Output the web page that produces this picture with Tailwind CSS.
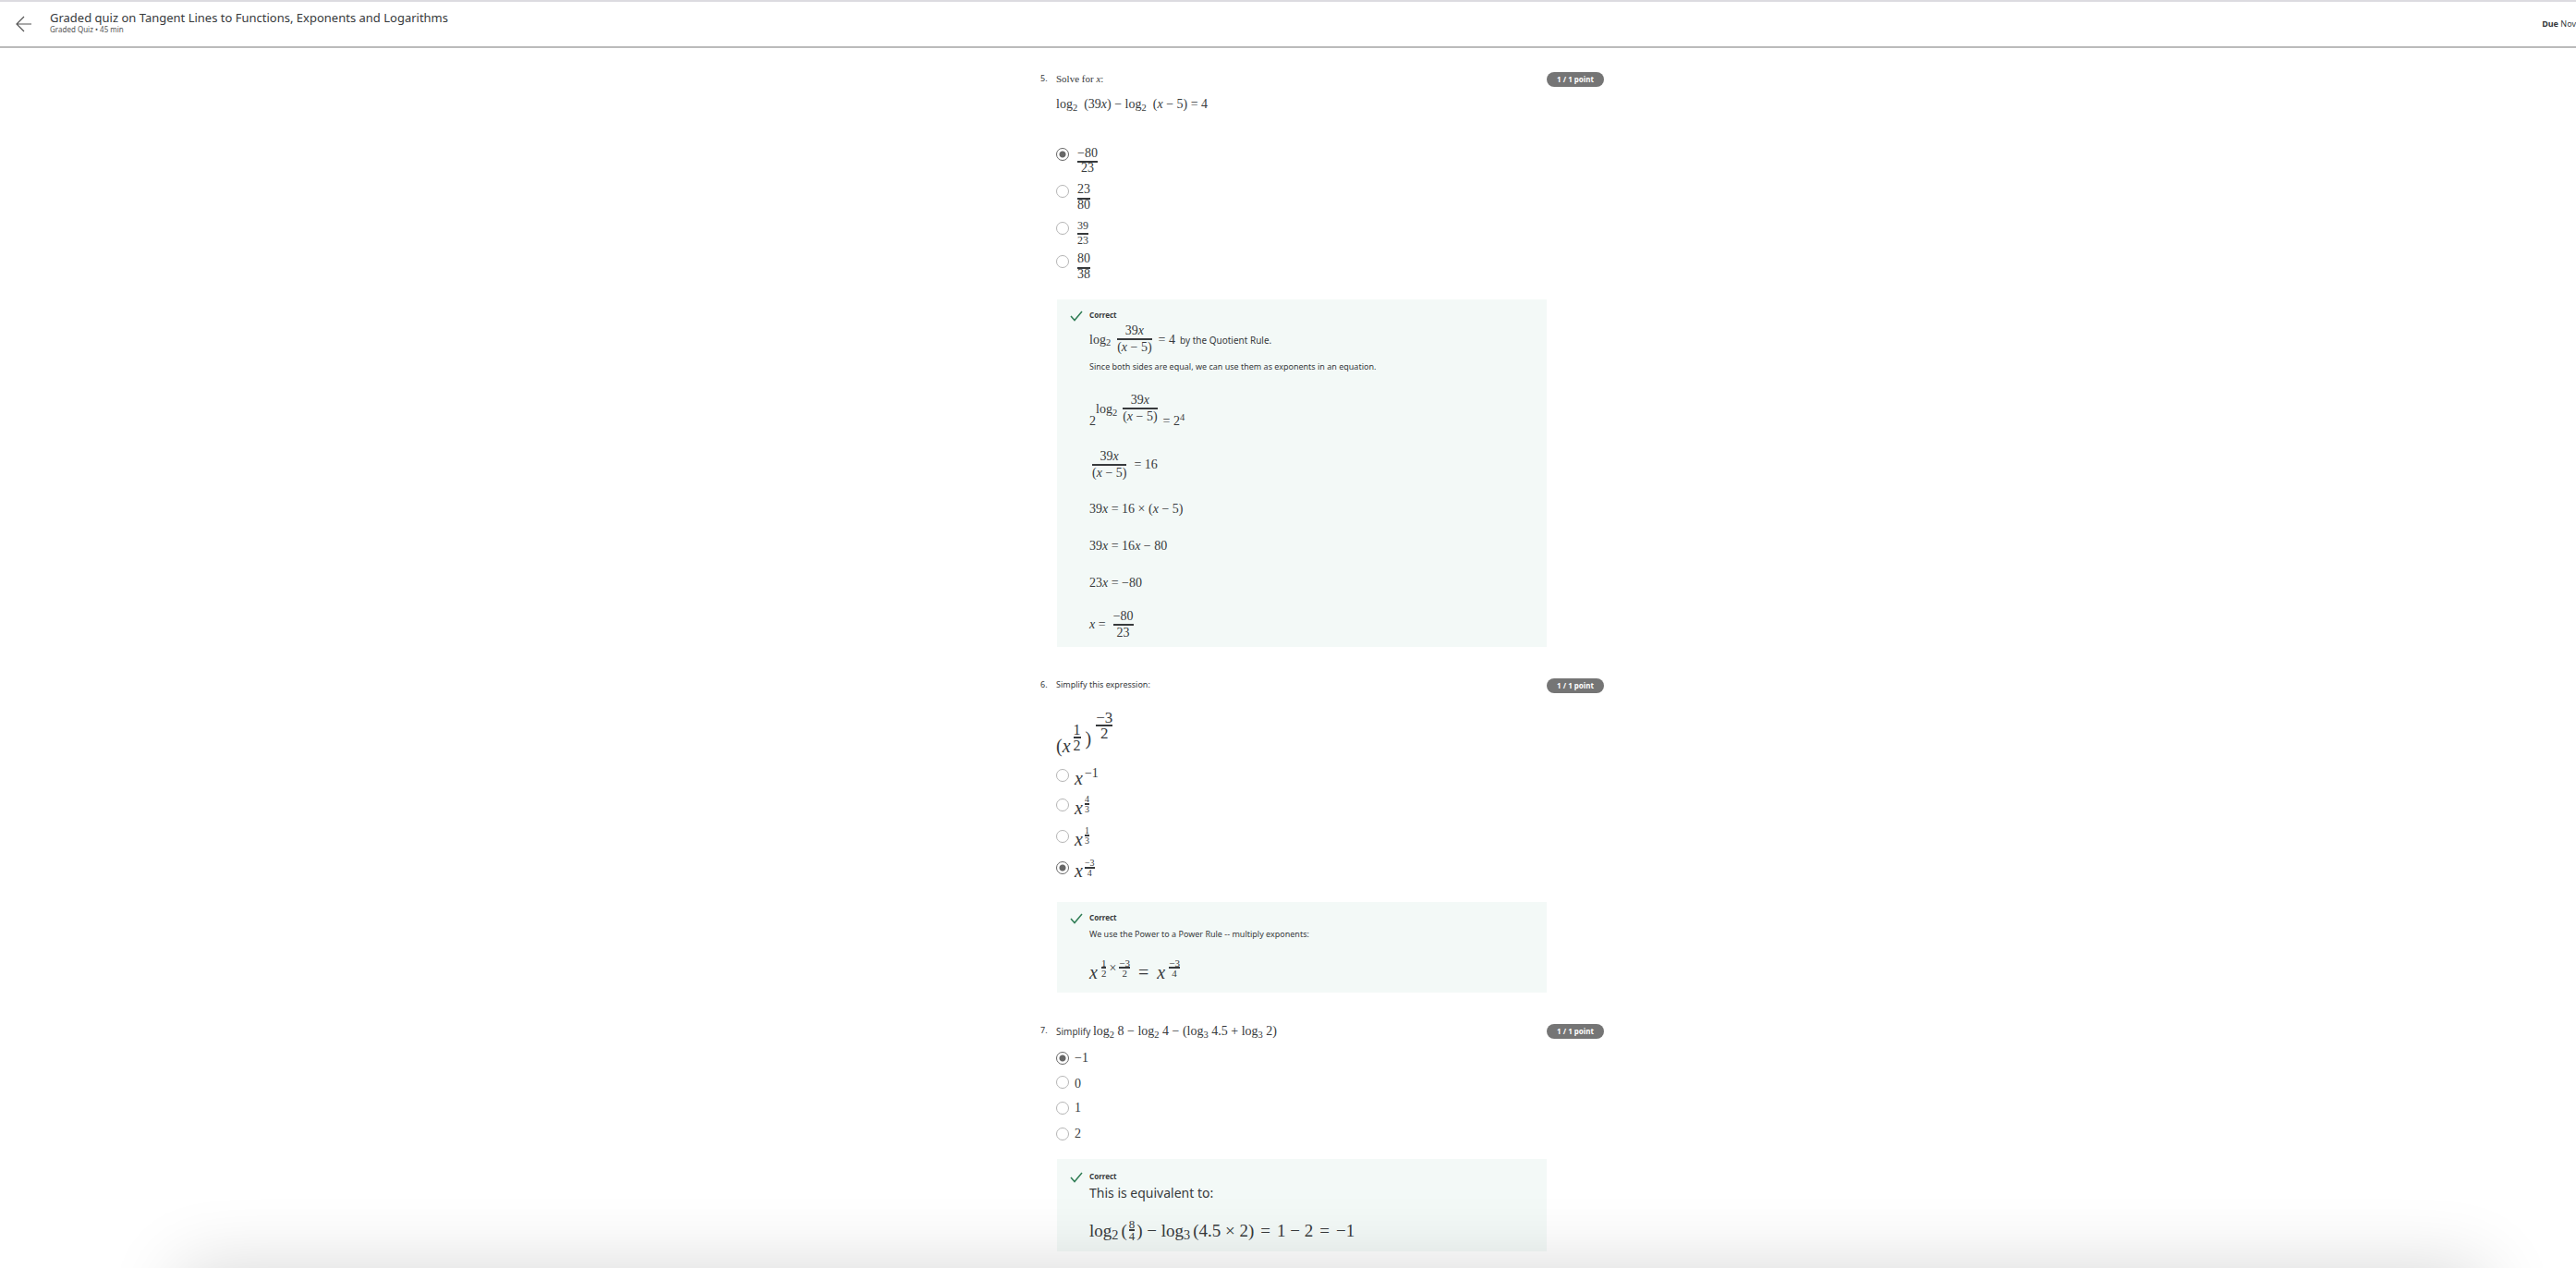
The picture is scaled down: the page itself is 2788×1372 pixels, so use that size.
<!DOCTYPE html>
<html lang="en">
<head>
<meta charset="utf-8">
<title>Graded quiz on Tangent Lines to Functions, Exponents and Logarithms</title>
<script src="https://cdn.jsdelivr.net/npm/@tailwindcss/browser@4"></script>
</head>
<body class="relative min-h-screen bg-white font-['Noto_Sans',sans-serif] text-[#373a3c]">
<header class="flex h-[52px] items-center overflow-hidden border-t-2 border-b-2 border-t-[#dcdbe0] border-b-[#bbbbbb]">
  <a href="#" aria-label="Back" class="ml-[17px] block">
    <svg class="h-[18px] w-[18px]" viewBox="0 0 18 18" fill="none" stroke="#555" stroke-width="1.2"><path d="M17 9H1M9 1L1 9l8 8"/></svg>
  </a>
  <div class="-mt-1 ml-[19px] grow">
    <h1 class="text-[13px] leading-4">Graded quiz on Tangent Lines to Functions, Exponents and Logarithms</h1>
    <p class="text-[8px] leading-[10px] text-[#555]">Graded Quiz • 45 min</p>
  </div>
  <p class="text-[9px] leading-4 whitespace-nowrap"><b>Due</b> Nov</p>
</header>

<main class="flex justify-center pl-[74px]">
<div class="w-full max-w-[610px] pt-[26px] pb-[16px]">

  <!-- Question 5 -->
  <section class="grid grid-cols-[17px_1fr_62px]">
    <span class="text-[9px] leading-[14px]">5.</span>
    <h2 class="font-['Liberation_Serif',serif] text-[11px] leading-[14px]">Solve for <i>x</i>:</h2>
    <span class="h-4 rounded-full bg-[#757575] text-center text-[8px] leading-[15px] font-bold text-white">1 / 1 point</span>
    <div class="col-start-2 font-['Liberation_Serif',serif]">
      <p class="mt-2 text-[14px] leading-[22px] whitespace-nowrap">log<sub>2</sub>&nbsp; (39<i>x</i>) − log<sub>2</sub>&nbsp; (<i>x</i> − 5) = 4</p>
      <fieldset class="mt-[33px] text-[14px]">
        <label class="flex h-10 items-start"><input type="radio" name="q5" checked class="mt-[3px] mr-[9px] size-[14px] appearance-none rounded-full border border-[#b5b5b5] checked:border-[#666] checked:bg-[radial-gradient(#666_3px,transparent_4px)]">
          <span class="flex flex-col text-center"><span class="border-b-2 leading-[17px]">−80</span><span class="leading-3">23</span></span></label>
        <label class="flex h-10 items-start"><input type="radio" name="q5" class="mt-[3px] mr-[9px] size-[14px] appearance-none rounded-full border border-[#b5b5b5] checked:border-[#666] checked:bg-[radial-gradient(#666_3px,transparent_4px)]">
          <span class="flex flex-col text-center"><span class="border-b-2 leading-[15px] pb-[2px]">23</span><span class="leading-3">80</span></span></label>
        <label class="flex h-9 items-start"><input type="radio" name="q5" class="mt-[3px] mr-[9px] size-[14px] appearance-none rounded-full border border-[#b5b5b5] checked:border-[#666] checked:bg-[radial-gradient(#666_3px,transparent_4px)]">
          <span class="flex flex-col text-center text-[12px]"><span class="border-b-2 leading-[15px]">39</span><span class="leading-3">23</span></span></label>
        <label class="flex h-9 items-start"><input type="radio" name="q5" class="mt-[3px] mr-[9px] size-[14px] appearance-none rounded-full border border-[#b5b5b5] checked:border-[#666] checked:bg-[radial-gradient(#666_3px,transparent_4px)]">
          <span class="flex flex-col text-center"><span class="border-b-2 leading-[14px] pb-[2px]">80</span><span class="leading-3">38</span></span></label>
      </fieldset>
      <div class="mt-[15px] ml-px flex gap-[7px] bg-[#f3f9f7] pt-3 pb-[6px] pl-[14px]">
        <svg class="h-3 w-[14px]" viewBox="0 0 14 12" fill="none" stroke="#2f7d55" stroke-width="1.5"><path d="M1 6l4 4.500L13 1"/></svg>
        <div class="text-[14px]">
          <p class="font-['Noto_Sans',sans-serif] text-[8px] leading-[10px] font-bold">Correct</p>
          <div class="mt-[3px] flex h-9 items-center whitespace-nowrap">
            <span>log<sub>2</sub></span>
            <span class="mx-[7px] flex flex-col text-center"><span class="border-b-2 leading-4">39<i>x</i></span><span class="leading-4">(<i>x</i> − 5)</span></span>
            <span>= 4</span>
            <span class="ml-[5px] pt-[2px] font-['Noto_Sans',sans-serif] text-[10px]">by the Quotient Rule.</span>
          </div>
          <p class="mt-[6px] font-['Noto_Sans',sans-serif] text-[9px] leading-3">Since both sides are equal, we can use them as exponents in an equation.</p>
          <div class="mt-[22px] flex h-[39px] items-end leading-4 whitespace-nowrap">
            <span>2</span>
            <span class="mb-[13px]">log<sub>2</sub></span>
            <span class="mx-[6px] mb-[5px] flex flex-col text-center"><span class="border-b-2">39<i>x</i></span><span>(<i>x</i> − 5)</span></span>
            <span>= 2<sup>4</sup></span>
          </div>
          <div class="mt-[21px] flex h-9 items-center leading-4 whitespace-nowrap">
            <span class="mr-2 ml-[3px] flex flex-col text-center"><span class="border-b-2">39<i>x</i></span><span>(<i>x</i> − 5)</span></span>
            <span>= 16</span>
          </div>
          <p class="mt-5 leading-5">39<i>x</i> = 16 × (<i>x</i> − 5)</p>
          <p class="mt-5 leading-5">39<i>x</i> = 16<i>x</i> − 80</p>
          <p class="mt-5 leading-5">23<i>x</i> = −80</p>
          <div class="mt-[17px] flex h-9 items-center leading-4">
            <span class="mr-2"><i>x</i> =</span>
            <span class="flex flex-col text-center"><span class="border-b-2">−80</span><span>23</span></span>
          </div>
        </div>
      </div>
    </div>
  </section>

  <!-- Question 6 -->
  <section class="mt-[34px] grid grid-cols-[17px_1fr_62px]">
    <span class="text-[9px] leading-[14px]">6.</span>
    <h2 class="text-[9px] leading-[14px]">Simplify this expression:</h2>
    <span class="h-4 rounded-full bg-[#757575] text-center text-[8px] leading-[15px] font-bold text-white">1 / 1 point</span>
    <div class="col-start-2 font-['Liberation_Serif',serif]">
      <div class="mt-[18px] flex h-[50px] items-start text-[20px] leading-5">
        <span class="mt-[29px]">(<i>x</i></span>
        <span class="mt-[14px] ml-[3px] flex flex-col text-center text-[16px] leading-4"><span class="border-b-2 leading-[15px]">1</span><span>2</span></span>
        <span class="mt-[21px] ml-[5px]">)</span>
        <span class="mt-px ml-[5px] flex flex-col text-center text-[17px] leading-4"><span class="border-b-2 leading-[15px]">−3</span><span>2</span></span>
      </div>
      <fieldset class="mt-[11px] text-[20px] leading-5">
        <label class="flex h-8 items-start"><input type="radio" name="q6" class="mt-[3px] mr-[6px] size-[14px] appearance-none rounded-full border border-[#b5b5b5] checked:border-[#666] checked:bg-[radial-gradient(#666_3px,transparent_4px)]">
          <i class="mt-[3px]">x</i><span class="ml-[2px] text-[14px] leading-4">−1</span></label>
        <label class="flex h-[34px] items-start"><input type="radio" name="q6" class="mt-[3px] mr-[6px] size-[14px] appearance-none rounded-full border border-[#b5b5b5] checked:border-[#666] checked:bg-[radial-gradient(#666_3px,transparent_4px)]">
          <i class="mt-[3px]">x</i><span class="ml-[2px] flex flex-col text-center text-[10px]"><span class="border-b-2 leading-2">4</span><span class="leading-[10px]">3</span></span></label>
        <label class="flex h-[34px] items-start"><input type="radio" name="q6" class="mt-[3px] mr-[6px] size-[14px] appearance-none rounded-full border border-[#b5b5b5] checked:border-[#666] checked:bg-[radial-gradient(#666_3px,transparent_4px)]">
          <i class="mt-[3px]">x</i><span class="ml-[2px] flex flex-col text-center text-[10px]"><span class="border-b-2 leading-2">1</span><span class="leading-[10px]">3</span></span></label>
        <label class="flex h-8 items-start"><input type="radio" name="q6" checked class="mt-[3px] mr-[6px] size-[14px] appearance-none rounded-full border border-[#b5b5b5] checked:border-[#666] checked:bg-[radial-gradient(#666_3px,transparent_4px)]">
          <i class="mt-[3px]">x</i><span class="ml-[2px] flex flex-col text-center text-[10px]"><span class="border-b-2 leading-[9px]">−3</span><span class="leading-[9px]">4</span></span></label>
      </fieldset>
      <div class="mt-[15px] ml-px flex gap-[7px] bg-[#f3f9f7] pt-3 pb-3 pl-[14px]">
        <svg class="h-3 w-[14px]" viewBox="0 0 14 12" fill="none" stroke="#2f7d55" stroke-width="1.5"><path d="M1 6l4 4.500L13 1"/></svg>
        <div>
          <p class="font-['Noto_Sans',sans-serif] text-[8px] leading-[10px] font-bold">Correct</p>
          <p class="mt-[7px] font-['Noto_Sans',sans-serif] text-[9px] leading-3">We use the Power to a Power Rule -- multiply exponents:</p>
          <div class="mt-[21px] flex h-6 items-start text-[20px] leading-5">
            <i class="mt-1">x</i>
            <span class="ml-1 flex flex-col text-center text-[11px]"><span class="border-b-2 leading-2">1</span><span class="leading-[11px]">2</span></span>
            <span class="mx-[3px] text-[14px]">×</span>
            <span class="flex flex-col text-center text-[11px]"><span class="border-b-2 leading-2">−3</span><span class="leading-[11px]">2</span></span>
            <span class="mx-[9px] mt-1">=</span>
            <i class="mt-1">x</i>
            <span class="ml-1 flex flex-col text-center text-[11px]"><span class="border-b-2 leading-2">−3</span><span class="leading-[11px]">4</span></span>
          </div>
        </div>
      </div>
    </div>
  </section>

  <!-- Question 7 -->
  <section class="mt-[34px] grid grid-cols-[17px_1fr_62px]">
    <span class="text-[9px] leading-[14px]">7.</span>
    <h2 class="h-4 text-[10px] leading-4 whitespace-nowrap">Simplify <span class="font-['Liberation_Serif',serif] text-[14px]">log<sub>2</sub> 8 − log<sub>2</sub> 4 − (log<sub>3</sub> 4.5 + log<sub>3</sub> 2)</span></h2>
    <span class="h-4 rounded-full bg-[#757575] text-center text-[8px] leading-[15px] font-bold text-white">1 / 1 point</span>
    <div class="col-start-2 font-['Liberation_Serif',serif]">
      <fieldset class="mt-[11px] text-[14px] leading-5">
        <label class="flex h-[26px] items-start"><input type="radio" name="q7" checked class="mt-[3px] mr-[6px] size-[14px] appearance-none rounded-full border border-[#b5b5b5] checked:border-[#666] checked:bg-[radial-gradient(#666_3px,transparent_4px)]"><span>−1</span></label>
        <label class="flex h-7 items-start"><input type="radio" name="q7" class="mt-[3px] mr-[6px] size-[14px] appearance-none rounded-full border border-[#b5b5b5] checked:border-[#666] checked:bg-[radial-gradient(#666_3px,transparent_4px)]"><span class="pt-[2px]">0</span></label>
        <label class="flex h-7 items-start"><input type="radio" name="q7" class="mt-[3px] mr-[6px] size-[14px] appearance-none rounded-full border border-[#b5b5b5] checked:border-[#666] checked:bg-[radial-gradient(#666_3px,transparent_4px)]"><span>1</span></label>
        <label class="flex h-7 items-start"><input type="radio" name="q7" class="mt-[3px] mr-[6px] size-[14px] appearance-none rounded-full border border-[#b5b5b5] checked:border-[#666] checked:bg-[radial-gradient(#666_3px,transparent_4px)]"><span>2</span></label>
      </fieldset>
      <div class="mt-[9px] ml-px flex gap-[7px] bg-[#f3f9f7] pt-[14px] pb-[10px] pl-[14px]">
        <svg class="h-3 w-[14px]" viewBox="0 0 14 12" fill="none" stroke="#2f7d55" stroke-width="1.5"><path d="M1 6l4 4.500L13 1"/></svg>
        <div>
          <p class="font-['Noto_Sans',sans-serif] text-[8px] leading-[10px] font-bold">Correct</p>
          <p class="mt-[3px] font-['Noto_Sans',sans-serif] text-[14px] leading-5">This is equivalent to:</p>
          <div class="mt-[19px] flex h-6 items-center text-[19px] whitespace-nowrap">
            <span>log<sub>2</sub></span><span class="ml-[3px]">(</span>
            <span class="mx-[2px] flex flex-col text-center text-[13px]"><span class="border-b-2 leading-[10px]">8</span><span class="leading-3">4</span></span>
            <span>)&nbsp;−&nbsp;log<sub>3</sub></span><span class="ml-[3px]">(4.5 × 2)</span><span class="mx-[7px]">=</span><span>1 − 2</span><span class="mx-[7px]">=</span><span>−1</span>
          </div>
        </div>
      </div>
    </div>
  </section>
</div>
</main>
<div aria-hidden="true" class="pointer-events-none absolute inset-x-0 bottom-0 h-[120px] overflow-hidden">
  <div class="absolute top-full right-[100px] left-[195px] h-[200px] shadow-[0_0_80px_rgb(0_0_0/0.16)]"></div>
</div>
</body>
</html>
